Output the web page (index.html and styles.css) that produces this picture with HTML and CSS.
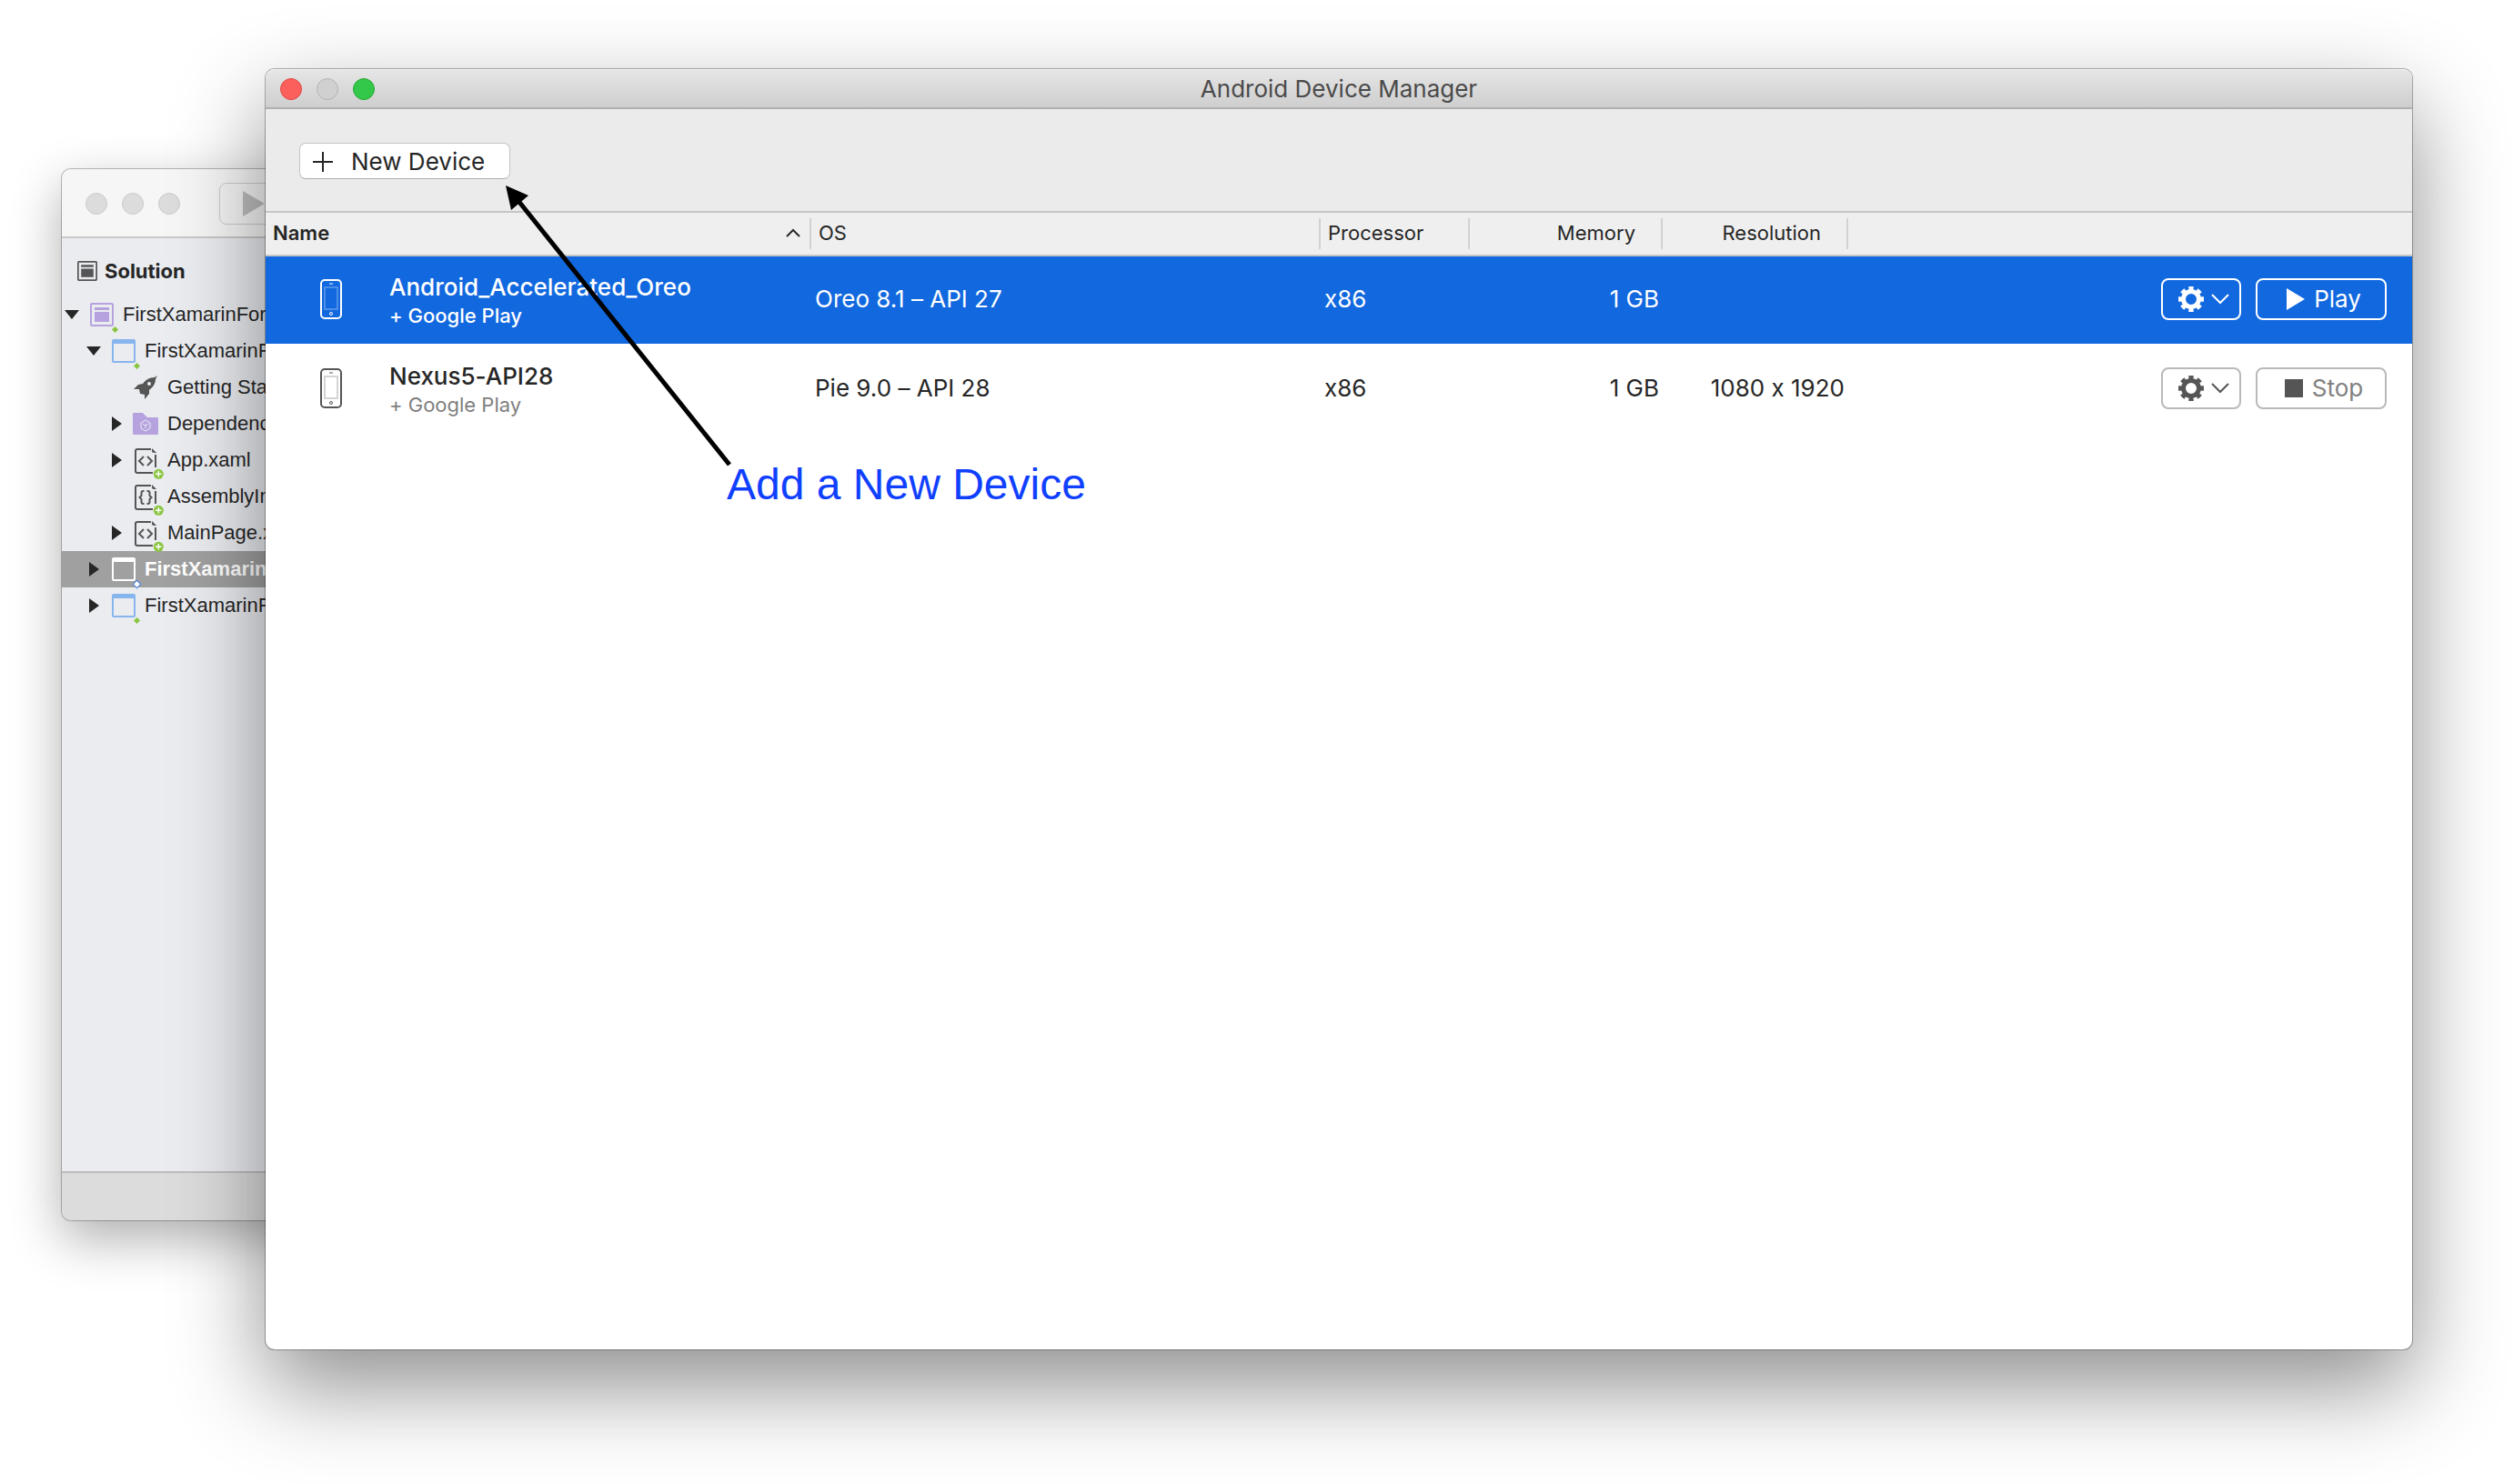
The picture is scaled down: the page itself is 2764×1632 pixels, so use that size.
FILE: index.html
```html
<!DOCTYPE html>
<html lang="en">
<head>
<meta charset="utf-8">
<title>Android Device Manager</title>
<link rel="stylesheet" href="styles.css">
</head>
<body>
<svg class="defs" aria-hidden="true">
  <symbol id="tri-down" viewBox="0 0 16 12"><path d="M0 1h16L8 11z" fill="#262626"/></symbol>
  <symbol id="tri-right" viewBox="0 0 12 16"><path d="M1 0v16l11-8z" fill="#262626"/></symbol>
  <symbol id="solution" viewBox="0 0 26 26"><rect x="1" y="1" width="24" height="24" rx="1" fill="none" stroke="currentColor" stroke-width="2"/><path d="M5 5h16v3H5zM5 10h16v11H5z" fill="currentColor"/></symbol>
  <symbol id="project" viewBox="0 0 26 26"><rect x="1" y="1" width="24" height="24" rx="1" fill="none" stroke="currentColor" stroke-width="2"/><path d="M1 1h24v4H1z" fill="currentColor"/></symbol>
  <symbol id="rocket" viewBox="0 0 28 28"><path d="M27 1l-3 2c-6 0-10 3-13 7l-5 1-5 5 6 0 1 5 5 1 0 5 5-6v-4c4-3 7-7 7-12z" fill="#555"/><circle cx="18" cy="10" r="2" fill="#eaecf0"/></symbol>
  <symbol id="folder" viewBox="0 0 28 24"><path d="M0 1q0-1 1-1h10l5 5h11q1 0 1 1v17q0 1-1 1H1q-1 0-1-1z" fill="#b6a2de"/><path d="M14 8l5 3v6l-5 3-5-3v-6zM11 12l3 2 3-2M14 14v3" fill="none" stroke="#eaecf0"/></symbol>
  <symbol id="xaml" viewBox="0 0 34 34"><path d="M18 1H3Q1 1 1 3v22q0 2 2 2h17M23 7v14" fill="none" stroke="#555" stroke-width="2"/><path d="M19 0l5 5h-3q-2 0-2-2z" fill="#555"/><path d="M10 9l-5 5 5 5M14 9l5 5-5 5" fill="none" stroke="#555" stroke-width="2"/><circle cx="26.3" cy="28.3" r="5.5" fill="#8bc540"/><path d="M26.3 25v6.6M23 28.3h6.6" stroke="#fff" stroke-width="1.4"/></symbol>
  <symbol id="code" viewBox="0 0 34 34"><path d="M18 1H3Q1 1 1 3v22q0 2 2 2h17M23 7v14" fill="none" stroke="#555" stroke-width="2"/><path d="M19 0l5 5h-3q-2 0-2-2z" fill="#555"/><path d="M10.500 7H9.500Q7.500 7 7.500 9v3L5.500 14l2 2v3q0 2 2 2h1M13.500 7h1q2 0 2 2v3l2 2-2 2v3q0 2-2 2h-1" fill="none" stroke="#555" stroke-width="2"/><circle cx="26.3" cy="28.3" r="5.5" fill="#8bc540"/><path d="M26.3 25v6.6M23 28.3h6.6" stroke="#fff" stroke-width="1.4"/></symbol>
  <symbol id="phone" viewBox="0 0 24 44"><rect x="1" y="1" width="22" height="42" rx="4" fill="none" stroke="currentColor" stroke-width="2"/><path d="M10 5h4" stroke="currentColor"/><rect x="5" y="9" width="14" height="24" fill="none" stroke="currentColor" stroke-width="2" opacity=".25"/><circle cx="12" cy="38" r="1.5" fill="none" stroke="currentColor"/></symbol>
  <symbol id="gear" viewBox="0 0 28 28"><circle cx="14" cy="14" r="8.5" fill="none" stroke="currentColor" stroke-width="5"/><circle cx="14" cy="14" r="12" fill="none" stroke="currentColor" stroke-width="4" pathLength="80" stroke-dasharray="5.6 4.4" stroke-dashoffset="2.8"/></symbol>
  <symbol id="chevron" viewBox="0 0 20 12"><path d="M1 1l9 9 9-9" fill="none" stroke="currentColor" stroke-width="2"/></symbol>
</svg>

<main class="desktop">
  <section class="window ide" aria-label="Solution">
    <header class="ide-bar">
      <div class="lights">
        <button class="light" aria-label="Close"></button>
        <button class="light" aria-label="Minimize"></button>
        <button class="light" aria-label="Zoom"></button>
      </div>
      <button class="run" aria-label="Run"><svg width="24" height="28" viewBox="0 0 24 28"><path d="M0 0v28l24-14z" fill="#bfbfbf"/></svg></button>
    </header>
    <nav class="sidebar">
      <h2 class="side-title"><svg class="side-icon" width="22" height="22"><use href="#solution"/></svg>Solution</h2>
      <ul class="tree">
        <li class="node root"><svg class="tri"><use href="#tri-down"/></svg><span class="icon violet dot"><svg width="26" height="26"><use href="#solution"/></svg></span>FirstXamarinForms</li>
        <li class="node project"><svg class="tri"><use href="#tri-down"/></svg><span class="icon blue dot"><svg width="26" height="26"><use href="#project"/></svg></span>FirstXamarinForms</li>
        <li class="node file"><span class="tri"></span><span class="icon"><svg width="28" height="28"><use href="#rocket"/></svg></span>Getting Started</li>
        <li class="node file"><svg class="tri"><use href="#tri-right"/></svg><span class="icon"><svg width="28" height="24"><use href="#folder"/></svg></span>Dependencies</li>
        <li class="node file"><svg class="tri"><use href="#tri-right"/></svg><span class="icon doc"><svg width="34" height="34"><use href="#xaml"/></svg></span>App.xaml</li>
        <li class="node file"><span class="tri"></span><span class="icon doc"><svg width="34" height="34"><use href="#code"/></svg></span>AssemblyInfo.cs</li>
        <li class="node file"><svg class="tri"><use href="#tri-right"/></svg><span class="icon doc"><svg width="34" height="34"><use href="#xaml"/></svg></span>MainPage.xaml</li>
        <li class="node project selected"><svg class="tri"><use href="#tri-right"/></svg><span class="icon dot"><svg width="26" height="26"><use href="#project"/></svg></span>FirstXamarinForms</li>
        <li class="node project"><svg class="tri"><use href="#tri-right"/></svg><span class="icon blue dot"><svg width="26" height="26"><use href="#project"/></svg></span>FirstXamarinForms</li>
      </ul>
    </nav>
    <footer class="ide-status"></footer>
  </section>

  <section class="window manager" aria-labelledby="manager-title">
    <header class="title-bar">
      <div class="lights">
        <button class="light red" aria-label="Close"></button>
        <button class="light" aria-label="Minimize"></button>
        <button class="light green" aria-label="Zoom"></button>
      </div>
      <h1 class="title" id="manager-title">Android Device Manager</h1>
    </header>
    <div class="toolbar">
      <button class="new-device"><svg width="22" height="22" viewBox="0 0 22 22"><path d="M11 0v22M0 11h22" stroke="#262626" stroke-width="2"/></svg>New Device</button>
    </div>
    <table class="devices">
      <colgroup><col class="c-name"><col class="c-os"><col class="c-cpu"><col class="c-mem"><col class="c-res"><col></colgroup>
      <thead>
        <tr>
          <th class="sorted" aria-sort="ascending"><span class="sort">Name<svg width="16" height="10" viewBox="0 0 16 10"><path d="M1 9l7-7 7 7" fill="none" stroke="#262626" stroke-width="2"/></svg></span></th>
          <th>OS</th><th>Processor</th><th class="num">Memory</th><th class="num">Resolution</th><th class="last" aria-label="Actions"></th>
        </tr>
      </thead>
      <tbody>
        <tr class="active">
          <td><div class="device"><svg width="24" height="44"><use href="#phone"/></svg><div class="label"><div class="name">Android_Accelerated_Oreo</div><div class="sub">+ Google Play</div></div></div></td>
          <td>Oreo 8.1 – API 27</td><td>x86</td><td class="num">1 GB</td><td class="num"></td>
          <td><div class="actions"><button class="btn menu" aria-label="Device options"><svg width="28" height="28"><use href="#gear"/></svg><svg width="20" height="12"><use href="#chevron"/></svg></button><button class="btn go"><svg width="20" height="24" viewBox="0 0 20 24"><path d="M0 0v24l20-12z" fill="currentColor"/></svg>Play</button></div></td>
        </tr>
        <tr>
          <td><div class="device"><svg width="24" height="44"><use href="#phone"/></svg><div class="label"><div class="name">Nexus5-API28</div><div class="sub">+ Google Play</div></div></div></td>
          <td>Pie 9.0 – API 28</td><td>x86</td><td class="num">1 GB</td><td class="num">1080 x 1920</td>
          <td><div class="actions"><button class="btn menu" aria-label="Device options"><svg width="28" height="28"><use href="#gear"/></svg><svg width="20" height="12"><use href="#chevron"/></svg></button><button class="btn go stop"><svg width="20" height="20" viewBox="0 0 20 20"><path d="M0 0h20v20H0z" fill="#555"/></svg><span>Stop</span></button></div></td>
        </tr>
      </tbody>
    </table>
    <svg class="arrow" width="260" height="320" viewBox="0 0 260 320" aria-hidden="true"><path d="M18 21l232 290" stroke="#000" stroke-width="5"/><path d="M4 4l25 11-19 16z"/></svg>
    <p class="note">Add a New Device</p>
  </section>
</main>
</body>
</html>
```
FILE: styles.css
```css
* { box-sizing: border-box; }

body {
  margin: 0;
  background: #fff;
  color: #262626;
  font-family: Inter, "Liberation Sans", sans-serif;
  font-feature-settings: "calt" 0;
}

button {
  margin: 0;
  padding: 0;
  font: inherit;
  color: inherit;
}

svg { display: block; flex: none; }
.defs { position: absolute; width: 0; height: 0; }

.desktop {
  position: relative;
  min-height: 100vh;
  overflow: hidden;
}

.window {
  position: absolute;
  display: flex;
  flex-direction: column;
  border-radius: 10px;
}

.lights { display: flex; gap: 16px; }
.light {
  width: 24px;
  height: 24px;
  border: 1px solid #b4b4b4;
  border-radius: 50%;
  background: #d0d0d0;
}
.light.red { background: #fc605c; border-color: #df4744; }
.light.green { background: #34c84a; border-color: #24a732; }

/* IDE window in the background */
.ide {
  left: 68px;
  top: 186px;
  bottom: 290px;
  width: 50%;
  background: #eaecf0;
  box-shadow: 0 0 0 1px rgba(0, 0, 0, .25), 0 20px 56px rgba(0, 0, 0, .32);
}
.ide-bar {
  display: flex;
  align-items: center;
  gap: 43px;
  height: 76px;
  padding: 2px 0 0 26px;
  border-bottom: 2px solid #c8c8c8;
  border-radius: 10px 10px 0 0;
  background: #f6f6f6;
}
.ide .light { background: #dcdcdc; border-color: #cacaca; }
.run {
  width: 120px;
  height: 46px;
  padding-left: 25px;
  border: 1px solid #ccc;
  border-radius: 8px;
  background: #f6f6f6;
}
.sidebar { flex: 1; }
.side-title {
  display: flex;
  align-items: center;
  gap: 8px;
  height: 64px;
  margin: 0;
  padding: 8px 0 0 17px;
  font-size: 22px;
  font-weight: 700;
}
.side-icon { color: #555; }
.tree {
  margin: 0;
  padding: 0;
  list-style: none;
  font-family: "Liberation Sans", Arial, sans-serif;
  font-size: 22px;
  white-space: nowrap;
}
.node {
  display: flex;
  align-items: center;
  height: 40px;
}
.node.root { padding-left: 3px; }
.node.project { padding-left: 27px; }
.node.file { padding-left: 52px; }
.tri { width: 16px; height: 16px; margin-right: 12px; }
.file .tri { margin-right: 10px; }
.icon { position: relative; margin-right: 10px; }
.doc { width: 26px; height: 26px; margin-left: 2px; }
.violet { color: #b6a2de; }
.blue { color: #87b5ee; }
.dot::after {
  content: "";
  position: absolute;
  right: -4px;
  bottom: -6px;
  width: 5px;
  height: 5px;
  background: #8bc540;
  transform: rotate(45deg);
}
.selected { background: #a0a0a0; font-weight: 700; }
.selected, .selected .icon { color: #fff; }
.selected .dot::after { background: #fff; outline: 1px solid #4a86e8; }
.ide-status {
  height: 54px;
  border-top: 2px solid #bdbdbd;
  border-radius: 0 0 10px 10px;
  background: #dcdcdc;
}

/* Device manager window */
.manager {
  left: 292px;
  right: 112px;
  top: 76px;
  bottom: 148px;
  background: #fff;
  box-shadow: 0 0 0 1px rgba(0, 0, 0, .3), 0 40px 100px rgba(0, 0, 0, .45);
}
.title-bar {
  display: grid;
  grid-template-columns: 1fr auto 1fr;
  align-items: center;
  height: 44px;
  padding: 2px 16px 0;
  border-bottom: 2px solid #b1b1b1;
  border-radius: 10px 10px 0 0;
  background: linear-gradient(#e6e6e6, #cecece);
  box-shadow: inset 0 1px #f4f4f4;
}
.title {
  margin: 0;
  color: #4a4a4a;
  font-size: 26px;
  font-weight: 400;
  line-height: 40px;
}
.toolbar {
  height: 114px;
  padding: 37px;
  border-bottom: 2px solid #c6c6c6;
  background: #ebebeb;
}
.new-device {
  display: flex;
  align-items: center;
  gap: 20px;
  width: 232px;
  height: 40px;
  padding: 1px 0 0 14px;
  border: 1px solid #c4c4c4;
  border-bottom-color: #adadad;
  border-radius: 7px;
  background: #fff;
  font-size: 26px;
}
.devices {
  width: 100%;
  table-layout: fixed;
  border-spacing: 0;
  font-size: 26px;
}
.c-name { width: 600px; }
.c-os { width: 560px; }
.c-cpu { width: 164px; }
.c-mem { width: 212px; }
.c-res { width: 204px; }

.devices th {
  height: 48px;
  padding: 0 8px 2px;
  border-bottom: 2px solid #c6c6c6;
  background: #efefef linear-gradient(#d2d2d2, #d2d2d2) right center / 2px 34px no-repeat;
  font-size: 22px;
  font-weight: 400;
  text-align: left;
}
.devices th.sorted { padding-right: 12px; font-weight: 600; }
.devices th.num { padding-right: 30px; }
.devices th.last { background-image: none; }
.sort {
  display: flex;
  align-items: center;
  justify-content: space-between;
}
.devices td {
  height: 98px;
  padding: 0 4px 3px;
  border-bottom: 2px solid #fff;
}
.devices .num { text-align: right; }
.active td { background: #1168df; background-clip: padding-box; color: #fff; }

.device {
  display: flex;
  align-items: center;
  gap: 52px;
  padding-left: 56px;
  color: #555;
}
.active .device { color: #fff; }
.label { padding-top: 4px; }
.name { color: #262626; font-weight: 500; line-height: 32px; }
.sub { color: #808080; font-size: 22px; line-height: 30px; }
.active .name { color: #fff; }
.active .sub { color: #fff; font-weight: 500; }

.actions {
  display: flex;
  justify-content: flex-end;
  gap: 16px;
  padding-right: 24px;
}
.btn {
  display: flex;
  align-items: center;
  justify-content: center;
  gap: 10px;
  height: 46px;
  padding-left: 6px;
  border: 2px solid #b9b9b9;
  border-radius: 8px;
  background: transparent;
  color: #555;
}
.menu { width: 88px; gap: 8px; }
.go { width: 144px; }
.stop span { color: #808080; }
.active .btn { border-color: #fff; color: #fff; }

/* Callout over the window */
.arrow { position: absolute; left: 260px; top: 124px; }
.note {
  position: absolute;
  left: 507px;
  top: 433px;
  margin: 0;
  color: #1040ff;
  font: 48px/48px "Liberation Sans", Arial, sans-serif;
  white-space: nowrap;
}
```
